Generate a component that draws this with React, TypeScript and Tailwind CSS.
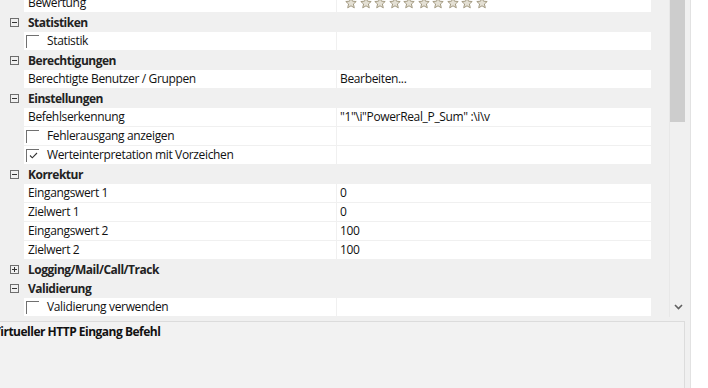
import React from "react";

type Row =
  | { kind: "head"; label: string; open: boolean }
  | { kind: "prop"; label: string; value?: string }
  | { kind: "check"; label: string; checked?: boolean }
  | { kind: "stars"; label: string };

const rows: Row[] = [
  { kind: "stars", label: "Bewertung" },
  { kind: "head", label: "Statistiken", open: true },
  { kind: "check", label: "Statistik" },
  { kind: "head", label: "Berechtigungen", open: true },
  { kind: "prop", label: "Berechtigte Benutzer / Gruppen", value: "Bearbeiten..." },
  { kind: "head", label: "Einstellungen", open: true },
  { kind: "prop", label: "Befehlserkennung", value: '"1"\\i"PowerReal_P_Sum" :\\i\\v' },
  { kind: "check", label: "Fehlerausgang anzeigen" },
  { kind: "check", label: "Werteinterpretation mit Vorzeichen", checked: true },
  { kind: "head", label: "Korrektur", open: true },
  { kind: "prop", label: "Eingangswert 1", value: "0" },
  { kind: "prop", label: "Zielwert 1", value: "0" },
  { kind: "prop", label: "Eingangswert 2", value: "100" },
  { kind: "prop", label: "Zielwert 2", value: "100" },
  { kind: "head", label: "Logging/Mail/Call/Track", open: false },
  { kind: "head", label: "Validierung", open: true },
  { kind: "check", label: "Validierung verwenden" },
];

const Star = () => (
  <svg width="12" height="12" viewBox="0 0 12 12" className="shrink-0">
    <path
      d="M6 0.8 L7.5 4.2 L11.2 4.5 L8.4 7 L9.3 10.8 L6 8.8 L2.7 10.8 L3.6 7 L0.8 4.5 L4.5 4.2 Z"
      fill="#e4e0d4"
      stroke="#a39a82"
      strokeWidth="1"
      strokeLinejoin="round"
    />
  </svg>
);

const Expander = ({ open }: { open: boolean }) => (
  <div className="relative ml-[10px] w-[9px] h-[9px] border border-[#6e6e6e] shrink-0">
    <div className="absolute left-[1px] top-[3px] w-[5px] h-[1px] bg-[#333]" />
    {!open && <div className="absolute left-[3px] top-[1px] w-[1px] h-[5px] bg-[#333]" />}
  </div>
);

const CheckBox = ({ checked }: { checked?: boolean }) => (
  <div className="w-[13px] h-[13px] border-t border-l border-[#707070] shrink-0 flex items-center justify-center">
    {checked && (
      <svg width="9" height="7" viewBox="0 0 9 7">
        <path d="M1 3.5 L3.3 5.8 L8 1" fill="none" stroke="#333" strokeWidth="1.1" />
      </svg>
    )}
  </div>
);

function GridRow({ row }: { row: Row }) {
  if (row.kind === "head") {
    return (
      <div className="flex items-center h-[19px]">
        <Expander open={row.open} />
        <span className="ml-[9px] font-bold tracking-[-0.5px] text-[#222]">{row.label}</span>
      </div>
    );
  }
  return (
    <div className="flex h-[19px] pl-[24px]">
      <div className="flex h-[18px] w-[627px] bg-white">
        <div className="flex items-center w-[313px] border-r border-[#f0f0f0]">
          {row.kind === "check" ? (
            <div className="flex items-center pl-[2px]">
              <CheckBox checked={row.checked} />
              <span className="ml-[8px]">{row.label}</span>
            </div>
          ) : (
            <span className="pl-[4px]">{row.label}</span>
          )}
        </div>
        <div className="flex items-center pl-[3px] flex-1 overflow-hidden">
          {row.kind === "prop" && <span className="whitespace-pre">{row.value}</span>}
          {row.kind === "stars" && (
            <div className="flex gap-[2.5px] pl-[5px]">
              {Array.from({ length: 10 }).map((_, i) => (
                <Star key={i} />
              ))}
            </div>
          )}
        </div>
      </div>
    </div>
  );
}

export default function App() {
  return (
    <div className="w-[708px] h-[388px] overflow-hidden bg-white flex text-[12px] leading-[16px] tracking-[-0.35px] text-[#111] font-['Segoe_UI','Open_Sans',sans-serif]">
      <div className="w-[691px] h-full bg-[#f0f0f0] border-r border-[#e2e2e2] flex flex-col">
        <div className="flex h-[317px] shrink-0">
          <div className="w-[669px] overflow-hidden">
            <div className="-mt-[6px]">
              {rows.map((r, i) => (
                <GridRow key={i} row={r} />
              ))}
            </div>
          </div>
          <div className="w-[17px] h-full bg-[#f0f0f0] border-l border-[#e8e8e8] flex flex-col">
            <div className="h-[122px] w-[15px] bg-[#cdcdcd]" />
            <div className="flex-1" />
            <div className="h-[17px] flex items-center justify-center mb-[2px]">
              <svg width="9" height="6" viewBox="0 0 9 6">
                <path d="M1 1 L4.5 4.5 L8 1" fill="none" stroke="#606060" strokeWidth="1.6" />
              </svg>
            </div>
          </div>
        </div>
        <div className="flex-1 pt-[4px] pr-[5px]">
          <div className="h-full border-t border-r border-[#dcdcdc] bg-[#f2f2f2] overflow-hidden">
            <div className="-ml-[7px] pt-[2px] font-bold tracking-[-0.5px] text-[#111]">Virtueller HTTP Eingang Befehl</div>
          </div>
        </div>
      </div>
    </div>
  );
}
